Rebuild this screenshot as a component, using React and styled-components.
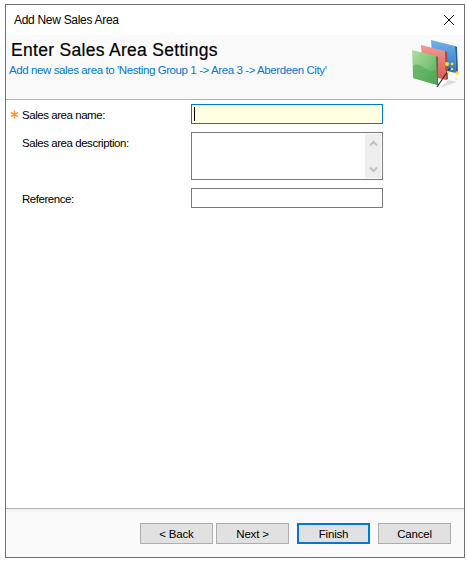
import React from "react";
import styled, { createGlobalStyle } from "styled-components";

const GlobalStyle = createGlobalStyle`
  html, body {
    margin: 0;
    padding: 0;
    background: #ffffff;
  }
  body {
    font-family: "Liberation Sans", Arial, sans-serif;
    font-size: 11px;
    color: #000000;
  }
`;

const Page = styled.div`
  width: 468px;
  height: 562px;
  padding: 4px 3px 4px 5px;
  box-sizing: border-box;
`;

const Window = styled.div`
  height: 100%;
  box-sizing: border-box;
  border: 1px solid #707070;
  display: flex;
  flex-direction: column;
  background: #ffffff;
`;

const TitleBar = styled.div`
  height: 30px;
  display: flex;
  align-items: center;
  justify-content: space-between;
  padding: 0 9px 0 8px;
  flex: none;
`;

const TitleText = styled.span`
  font-size: 12px;
  letter-spacing: -0.3px;
`;

const CloseIcon = styled.svg`
  width: 12px;
  height: 12px;
  display: block;
`;

const Banner = styled.div`
  height: 65px;
  flex: none;
  box-sizing: border-box;
  background: #fafafa;
  border-bottom: 1px solid #b4b4b4;
  display: flex;
  justify-content: space-between;
  padding: 5px 0 0 3px;
`;

const BannerText = styled.div`
  display: flex;
  flex-direction: column;
`;

const BannerTitle = styled.div`
  font-size: 17.5px;
  line-height: 20px;
  padding-left: 2px;
  -webkit-text-stroke: 0.2px #000;
  letter-spacing: 0.3px;
`;

const BannerSub = styled.div`
  font-size: 11.5px;
  line-height: 14px;
  margin-top: 3px;
  color: #0078d7;
  letter-spacing: -0.41px;
`;

const BannerIcon = styled.svg`
  width: 50px;
  height: 50px;
  margin: 0 3px 0 0;
  flex: none;
`;

const Form = styled.div`
  flex: 1;
  display: grid;
  grid-template-columns: 16px 169px 192px;
  grid-auto-rows: min-content;
  row-gap: 8px;
  padding: 4px 0 0 0;
`;

const StarCell = styled.div`
  display: flex;
  justify-content: flex-end;
  padding: 6px 3px 0 0;
`;

const Star = styled.svg`
  width: 9px;
  height: 9px;
  display: block;
`;

const Label = styled.label`
  padding-top: 4px;
  line-height: 14px;
  font-size: 11.5px;
  letter-spacing: -0.45px;
  white-space: nowrap;
`;

const Field = styled.div`
  box-sizing: border-box;
  height: ${(p) => p.$h}px;
  border: 1px solid ${(p) => (p.$focused ? "#0078d7" : "#7a7a7a")};
  background: ${(p) => (p.$focused ? "#ffffe1" : "#ffffff")};
  display: flex;
  justify-content: space-between;
  padding: 1px;
`;

const Caret = styled.span`
  width: 1px;
  height: 14px;
  margin: 1px 0 0 1px;
  background: #000000;
`;

const ScrollBar = styled.div`
  width: 16px;
  background: #eeeeee;
  display: flex;
  flex-direction: column;
  justify-content: space-between;
  align-items: center;
  padding: 6px 0 5px;
  box-sizing: border-box;
`;

const Chevron = styled.svg`
  width: 9px;
  height: 7px;
  display: block;
`;

const Footer = styled.div`
  height: 49px;
  flex: none;
  box-sizing: border-box;
  border-top: 1px solid #b4b4b4;
  background: linear-gradient(180deg, #f0f0f0 0, #fafafa 4px);
  display: flex;
  justify-content: flex-end;
  align-items: flex-start;
  padding: 14px 13px 0 0;
`;

const Button = styled.button`
  width: 73px;
  height: 21px;
  box-sizing: border-box;
  margin-left: ${(p) => p.$gap}px;
  padding: 0;
  border: ${(p) => (p.$primary ? "2px solid #0078d7" : "1px solid #adadad")};
  background: #e1e1e1;
  font-family: "Liberation Sans", Arial, sans-serif;
  font-size: 11.5px;
  letter-spacing: -0.2px;
  color: #000000;
`;

function FolderIcon() {
  return (
    <BannerIcon viewBox="0 2 50 50">
      <defs>
        <linearGradient id="blue" x1="0" y1="0" x2="0" y2="1">
          <stop offset="0" stopColor="#6fb6ea" />
          <stop offset="1" stopColor="#2a70c0" />
        </linearGradient>
        <linearGradient id="red" x1="0" y1="0" x2="0" y2="1">
          <stop offset="0" stopColor="#f09a94" />
          <stop offset="1" stopColor="#d85a52" />
        </linearGradient>
        <linearGradient id="green" x1="0" y1="0" x2="1" y2="1">
          <stop offset="0" stopColor="#b2deA6" />
          <stop offset="0.55" stopColor="#7cc476" />
          <stop offset="1" stopColor="#4aa552" />
        </linearGradient>
      </defs>
      <polygon points="20,2 44,8 45,35 22,30" fill="url(#blue)" />
      <polygon points="44,8 46,9 47,34 45,35" fill="#2a5f9c" />
      <polygon points="10,7 34,13 35,42 12,36" fill="url(#red)" />
      <polygon points="34,13 36,14 37,41 35,42" fill="#b5453f" />
      <polygon points="1,12 25,18 26,47 2,40" fill="url(#green)" />
      <polygon points="25,18 27,19 27,47 26,47" fill="#3f7f46" />
      <path d="M2 28 C 9 22, 16 36, 25 32 L 26 47 L 2 40 Z" fill="#4fa456" opacity="0.55" />
      <polygon points="28,50 46,44 38,42" fill="#dcdcdc" />
      <line x1="26" y1="49" x2="39" y2="30" stroke="#2b2b2b" strokeWidth="1.2" />
      <g fill="#f8e228">
        <circle cx="36" cy="26" r="2" />
        <circle cx="41" cy="26" r="1.4" />
        <circle cx="41" cy="31" r="1.2" />
        <circle cx="46" cy="35" r="1.8" />
        <circle cx="37" cy="34" r="1.2" />
        <circle cx="45" cy="41" r="0.8" />
      </g>
    </BannerIcon>
  );
}

function ChevronUp() {
  return (
    <Chevron viewBox="0 0 9 7">
      <path d="M1 5.5 L4.5 2 L8 5.5" fill="none" stroke="#c0c0c0" strokeWidth="2" />
    </Chevron>
  );
}

function ChevronDown() {
  return (
    <Chevron viewBox="0 0 9 7">
      <path d="M1 1.5 L4.5 5 L8 1.5" fill="none" stroke="#c0c0c0" strokeWidth="2" />
    </Chevron>
  );
}

export default function App() {
  return (
    <Page>
      <GlobalStyle />
      <Window>
        <TitleBar>
          <TitleText>Add New Sales Area</TitleText>
          <CloseIcon viewBox="0 0 12 12">
            <path d="M1 1 L11 11 M11 1 L1 11" stroke="#000" strokeWidth="1" fill="none" />
          </CloseIcon>
        </TitleBar>
        <Banner>
          <BannerText>
            <BannerTitle>Enter Sales Area Settings</BannerTitle>
            <BannerSub>Add new sales area to 'Nesting Group 1 -&gt; Area 3 -&gt; Aberdeen City'</BannerSub>
          </BannerText>
          <FolderIcon />
        </Banner>
        <Form>
          <StarCell>
            <Star viewBox="0 0 9 9">
              <path
                d="M4.5 0.5 V8.5 M0.8 2.4 L8.2 6.6 M8.2 2.4 L0.8 6.6"
                stroke="#f59a3c"
                strokeWidth="1.6"
                fill="none"
              />
            </Star>
          </StarCell>
          <Label>Sales area name:</Label>
          <Field $h={20} $focused>
            <Caret />
          </Field>
          <span />
          <Label>Sales area description:</Label>
          <Field $h={48}>
            <span />
            <ScrollBar>
              <ChevronUp />
              <ChevronDown />
            </ScrollBar>
          </Field>
          <span />
          <Label>Reference:</Label>
          <Field $h={20} />
        </Form>
        <Footer>
          <Button>&lt; Back</Button>
          <Button $gap={3}>Next &gt;</Button>
          <Button $gap={8} $primary>Finish</Button>
          <Button $gap={8}>Cancel</Button>
        </Footer>
      </Window>
    </Page>
  );
}
